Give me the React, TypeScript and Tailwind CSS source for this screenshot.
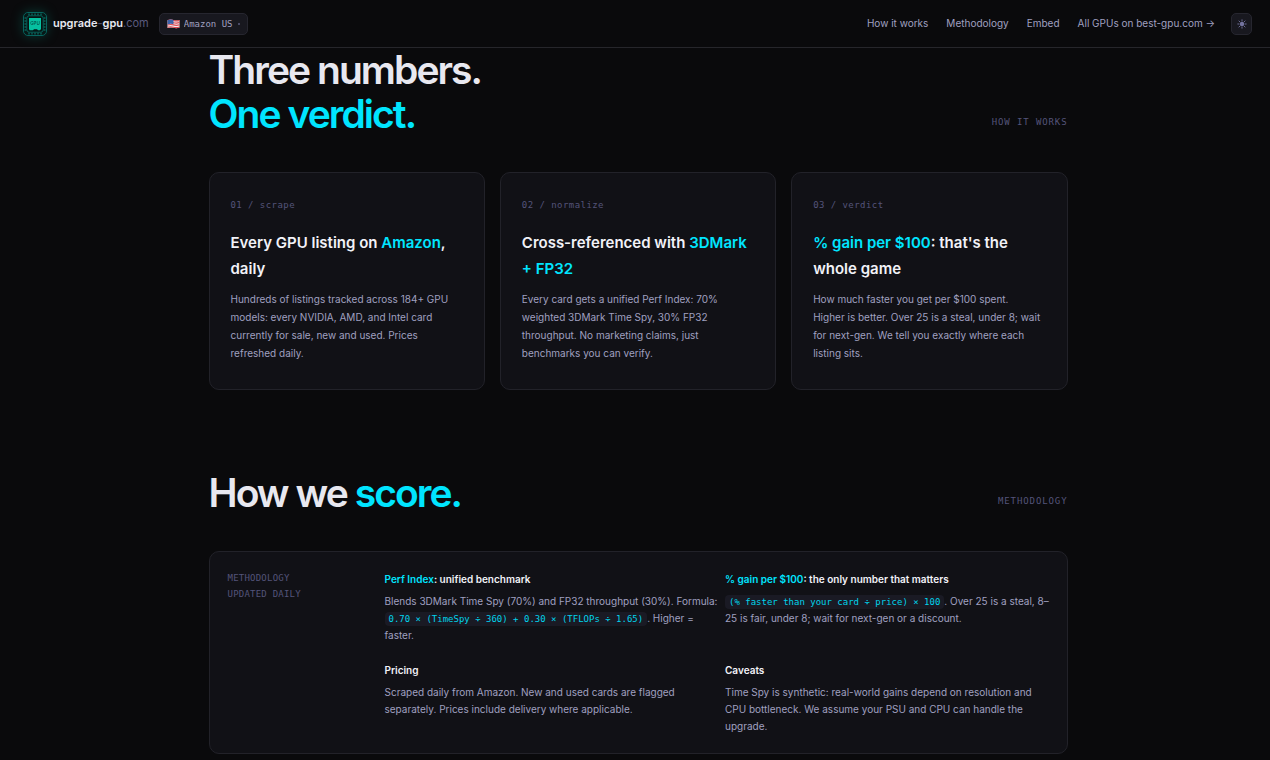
import { useState } from "react";
import type { ReactNode } from "react";

const NAV_LINKS = [
  { label: "How it works", href: "#how" },
  { label: "Methodology", href: "#methodology" },
  { label: "Embed", href: "#embed" },
  { label: "All GPUs on best-gpu.com →", href: "#all" },
];

function Accent({ children }: { children: ReactNode }) {
  return <span className="text-[#00e5ff]">{children}</span>;
}

function Code({ children }: { children: ReactNode }) {
  return (
    <code className="rounded-sm bg-[#1a1a24] px-1 py-[2px] font-['DejaVu_Sans_Mono',monospace] text-[9px] leading-none whitespace-nowrap text-[#00d4ec]">
      {children}
    </code>
  );
}

function Logo() {
  const pins = [6, 9, 12, 15, 18];
  return (
    <svg viewBox="0 0 24 24" className="size-6 shrink-0 drop-shadow-[0_0_6px_#00b89a44]" aria-hidden="true">
      <rect x="0.5" y="0.5" width="23" height="23" rx="4.5" fill="#071817" stroke="#07645e" />
      {pins.map((p) => (
        <path
          key={p}
          d={`M${p} 1.5v2M${p} 20.5v2M1.5 ${p}h2M20.5 ${p}h2`}
          stroke="#098378"
          strokeWidth="1"
        />
      ))}
      <rect x="3.8" y="3.8" width="16.4" height="16.4" rx="2.5" fill="#061514" stroke="#077067" strokeWidth="0.8" />
      <path d="M6 6h12v11l-1 1.3h-2l-1-1h-3l-1 1H6.6L6 17z" fill="#06c0a0" />
      <text x="12" y="13.3" textAnchor="middle" fontSize="4.5" fontFamily="Inter, sans-serif" fill="#04574e">
        GPU
      </text>
    </svg>
  );
}

function UsFlag() {
  return (
    <svg viewBox="0 0 13 10" className="h-[10px] w-[13px] shrink-0" aria-hidden="true">
      <path d="M0.5 1.2Q3.5 0 6.5 1T12.5 1V8.6Q9.5 9.6 6.5 8.8T0.5 9z" fill="#eeeef2" />
      <path
        d="M0.5 1.6Q3.5 0.5 6.5 1.5T12.5 1.5M0.5 3.8Q3.5 2.8 6.5 3.7T12.5 3.6M0.5 6Q3.5 5 6.5 5.9T12.5 5.8M0.5 8.3Q3.5 7.3 6.5 8.2T12.5 8"
        fill="none"
        stroke="#e0474f"
        strokeWidth="1.1"
      />
      <path d="M0.5 1.2Q3.5 0 6.5 1V5.2Q3.5 4.4 0.5 5.4z" fill="#3d62a8" />
    </svg>
  );
}

function SunIcon() {
  return (
    <svg viewBox="0 0 10 10" className="size-[10px]" aria-hidden="true">
      <circle cx="5" cy="5" r="2.2" fill="#7474a0" />
      <path
        d="M5 0.4v2M5 7.6v2M0.4 5h2M7.6 5h2M1.7 1.7l1.4 1.4M6.9 6.9l1.4 1.4M1.7 8.3l1.4-1.4M6.9 3.1l1.4-1.4"
        stroke="#7474a0"
        strokeWidth="0.9"
      />
    </svg>
  );
}

function Header() {
  const [store, setStore] = useState("us");

  return (
    <header className="flex h-12 items-center justify-between border-b border-[#26262b] pr-[18px] pl-[23px]">
      <div className="flex items-center gap-[10px]">
        <a href="#top" className="flex items-center gap-[6px] text-[11px] font-semibold text-[#e8e8f0]">
          <Logo />
          <span>
            upgrade<span className="text-[#4a4a6a]">-</span>gpu
            <span className="font-normal text-[#5a5a7e]">.com</span>
          </span>
        </a>
        <div className="flex h-[22px] items-center gap-1 rounded-[5px] border border-[#26262f] bg-[#18181f] px-[7px]">
          <UsFlag />
          <select
            aria-label="Amazon store"
            value={store}
            onChange={(e) => setStore(e.target.value)}
            className="w-[50px] appearance-none bg-transparent font-['DejaVu_Sans_Mono',monospace] text-[9px] leading-4 text-[#a0a0c0] outline-none"
          >
            <option value="us">Amazon US</option>
            <option value="uk">Amazon UK</option>
            <option value="de">Amazon DE</option>
          </select>
          <span className="size-[2px] rounded-full bg-[#5a5a7e]" />
        </div>
      </div>

      <div className="flex items-center gap-4">
        <nav className="flex items-center gap-[18px] text-[10px] text-[#a0a0c0]">
          {NAV_LINKS.map((link) => (
            <a key={link.label} href={link.href}>
              {link.label}
            </a>
          ))}
        </nav>
        <button
          type="button"
          aria-label="Toggle theme"
          className="flex h-[22px] w-[21px] items-center justify-center rounded-[5px] border border-[#26262f] bg-[#18181f]"
        >
          <SunIcon />
        </button>
      </div>
    </header>
  );
}

function SectionHead({ label, children }: { label: string; children: ReactNode }) {
  return (
    <div className="mb-9 flex items-end justify-between">
      <h2 className="text-[39px] leading-[44px] font-semibold tracking-tighter text-[#e8e8f0]">{children}</h2>
      <span className="pb-[6px] font-['DejaVu_Sans_Mono',monospace] text-[9px] leading-4 tracking-widest text-[#54547a] uppercase">
        {label}
      </span>
    </div>
  );
}

function StepCard({ step, title, children }: { step: string; title: ReactNode; children: ReactNode }) {
  return (
    <article className="rounded-[10px] border border-[#222229] bg-[#111116] px-[21px] pt-6 pb-[27px]">
      <p className="mb-[17px] font-['DejaVu_Sans_Mono',monospace] text-[9px] leading-4 tracking-wider text-[#54547a]">
        {step}
      </p>
      <h3 className="mb-2 text-[15px] leading-[26px] font-semibold text-[#f2f2f8]">{title}</h3>
      <p className="text-[10px] leading-[18px] text-[#a0a0c0]">{children}</p>
    </article>
  );
}

function Note({ title, children }: { title: ReactNode; children: ReactNode }) {
  return (
    <div>
      <h4 className="mb-[5px] text-[10px] leading-[18px] font-semibold text-[#f2f2f8]">{title}</h4>
      <p className="text-[10px] leading-[17px] text-[#a0a0c0]">{children}</p>
    </div>
  );
}

export default function App() {
  return (
    <div className="min-h-screen bg-[#0a0a0c] font-[Inter,sans-serif]">
      <Header />

      <main className="pr-[18px] pl-6">
        <div className="mx-auto max-w-[859px]">
          <section id="how">
            <SectionHead label="How it works">
              Three numbers.
              <br />
              <Accent>One verdict.</Accent>
            </SectionHead>
            <div className="grid grid-cols-3 gap-[15px]">
              <StepCard
                step="01 / scrape"
                title={
                  <>
                    Every GPU listing on <Accent>Amazon</Accent>, daily
                  </>
                }
              >
                Hundreds of listings tracked across 184+ GPU models: every NVIDIA, AMD, and Intel card currently for
                sale, new and used. Prices refreshed daily.
              </StepCard>
              <StepCard
                step="02 / normalize"
                title={
                  <>
                    Cross-referenced with <Accent>3DMark +&nbsp;FP32</Accent>
                  </>
                }
              >
                Every card gets a unified Perf Index: 70% weighted 3DMark Time Spy, 30% FP32 throughput. No marketing
                claims, just benchmarks you can verify.
              </StepCard>
              <StepCard
                step="03 / verdict"
                title={
                  <>
                    <Accent>% gain per $100</Accent>: that's the whole game
                  </>
                }
              >
                How much faster you get per $100 spent.
                <br />
                Higher is better. Over 25 is a steal, under 8; wait for next-gen. We tell you exactly where each
                listing&nbsp;sits.
              </StepCard>
            </div>
          </section>

          <section id="methodology" className="mt-[81px]">
            <SectionHead label="Methodology">
              How we <Accent>score.</Accent>
            </SectionHead>
            <div className="flex gap-[17px] rounded-[10px] border border-[#222229] bg-[#111116] p-[18px]">
              <p className="w-[140px] shrink-0 font-['DejaVu_Sans_Mono',monospace] text-[9px] leading-4 tracking-wide text-[#54547a] uppercase">
                Methodology
                <br />
                Updated daily
              </p>
              <div className="grid flex-1 grid-cols-2 gap-[17px]">
                <Note
                  title={
                    <>
                      <Accent>Perf Index</Accent>: unified benchmark
                    </>
                  }
                >
                  <span className="whitespace-nowrap">
                    Blends 3DMark Time Spy (70%) and FP32 throughput (30%). Formula:
                  </span>{" "}
                  <Code>0.70 × (TimeSpy ÷ 360) + 0.30 × (TFLOPs ÷ 1.65)</Code>. Higher =
                  <br />
                  faster.
                </Note>
                <Note
                  title={
                    <>
                      <Accent>% gain per $100</Accent>: the only number that matters
                    </>
                  }
                >
                  <span className="whitespace-nowrap">
                    <Code>(% faster than your card ÷ price) × 100</Code>. Over 25 is a steal, 8–
                  </span>
                  <br />
                  25 is fair, under 8; wait for next-gen or a discount.
                </Note>
                <Note title="Pricing">
                  Scraped daily from Amazon. New and used cards are flagged separately. Prices include delivery where
                  applicable.
                </Note>
                <Note title="Caveats">
                  Time Spy is synthetic: real-world gains depend on resolution and CPU bottleneck. We assume your PSU
                  and CPU can handle the upgrade.
                </Note>
              </div>
            </div>
          </section>
        </div>
      </main>
    </div>
  );
}
